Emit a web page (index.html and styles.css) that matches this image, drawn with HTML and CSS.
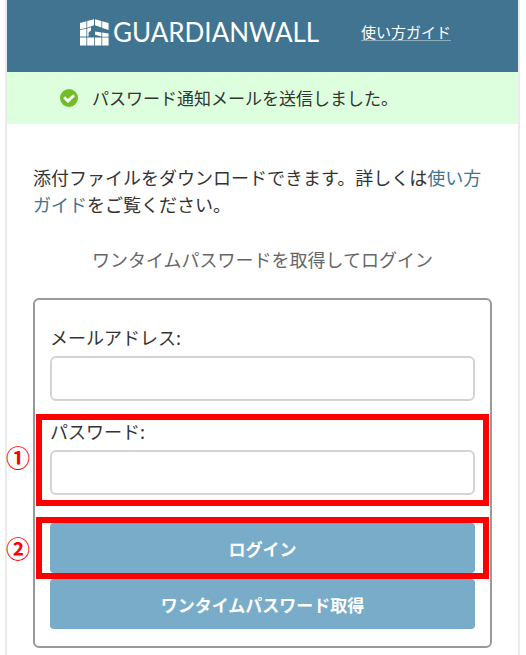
FILE: index.html
```html
<!DOCTYPE html>
<html lang="ja">
<head>
    <meta charset="UTF-8">
    <meta name="viewport" content="width=device-width, initial-scale=1.0">
    <title>GUARDIANWALL</title>
    <link rel="stylesheet" href="styles.css">
</head>
<body>
    <div class="page">
        <header class="header">
            <div class="logo">
                <svg class="logo-mark" viewBox="0 0 29 27" fill="#fff" aria-hidden="true">
                    <path d="M0 4 6.4 2.2V9L0 10.2zM7.2 2 14 .2V6.2L7.2 8.8zM15 .2 21.4 2V8.6L15 6.2zM22.2 2.2 28.6 4V11L22.2 9z"/>
                    <path d="M0 11 6.4 9.8V17.6H0zM7.2 9.6 11 8.2V11.5L8.6 13.5V17.6H7.2zM15 12.4 21.4 13.4V17.6L15 15.8zM22.2 13.5 28.6 14.5V17.8H22.2z"/>
                    <path d="M0 18.4H6.4V26.6H0zM7.2 18.4H14.2V26.6H7.2zM15 18.4H21.4V26.6H15zM22.2 18.6H28.6V26.6H22.2z"/>
                </svg>
                <span class="logo-text">GUARDIANWALL</span>
            </div>
            <a class="guide-link" href="#guide">使い方ガイド</a>
        </header>

        <div class="notice" role="status">
            <svg class="notice-icon" viewBox="0 0 18 18" aria-hidden="true">
                <circle cx="9" cy="9" r="9" fill="#6fbe28"/>
                <path d="M4.2 8.2 8 12 14 6.2" fill="none" stroke="#fff" stroke-width="2.8"/>
            </svg>
            <span>パスワード通知メールを送信しました。</span>
        </div>

        <main class="content">
            <p class="lead">添付ファイルをダウンロードできます。詳しくは<a href="#guide">使い方ガイド</a>をご覧ください。</p>
            <h1>ワンタイムパスワードを取得してログイン</h1>

            <form class="login-form">
                <div class="form-group">
                    <label for="email">メールアドレス:</label>
                    <input type="email" id="email" name="email">
                </div>
                <div class="form-group marked">
                    <label for="password">パスワード:</label>
                    <input type="password" id="password" name="password">
                    <span class="mark-frame"></span>
                    <span class="mark-number">①</span>
                </div>
                <div class="actions">
                    <div class="marked marked-button">
                        <button type="submit">ログイン</button>
                        <span class="mark-frame"></span>
                        <span class="mark-number">②</span>
                    </div>
                    <button type="button">ワンタイムパスワード取得</button>
                </div>
            </form>
        </main>
    </div>
</body>
</html>
```

FILE: styles.css
```css
* {
    box-sizing: border-box;
}
body {
    margin: 0;
    background-color: #fff;
    color: #333;
    font-family: "Noto Sans CJK JP", sans-serif;
    font-size: 18px;
    line-height: 26px;
}
a {
    color: #407490;
    text-decoration: none;
}
.page {
    margin: 0 6px 0 5px;
    min-height: 100vh;
    border: solid #ebebeb;
    border-width: 0 2px;
}
.header {
    display: flex;
    align-items: center;
    justify-content: space-between;
    height: 72px;
    padding: 0 67px 8px 73px;
    background-color: #407490;
}
.logo {
    display: flex;
    align-items: center;
    gap: 4px;
    color: #fff;
}
.logo-mark {
    width: 29px;
    height: 27px;
}
.logo-text {
    font-family: Lato, sans-serif;
    font-size: 26px;
    line-height: 32px;
}
.guide-link {
    border-bottom: 1px solid #8cacbc;
    color: #fff;
    font-size: 15px;
    line-height: 17px;
}
.notice {
    display: flex;
    align-items: center;
    gap: 14px;
    height: 52px;
    padding-left: 53px;
    background-color: #dfd;
    font-size: 17px;
}
.notice-icon {
    width: 18px;
    height: 18px;
}
.content {
    padding: 40px 26px 6px;
}
.lead {
    margin: 0 0 28px;
    line-height: 27px;
}
h1 {
    margin: 0 0 26px;
    color: #666;
    font-size: 18px;
    font-weight: normal;
    text-align: center;
}
.login-form {
    padding: 24px 15px 17px;
    border: 2px solid #999;
    border-radius: 6px;
}
.form-group {
    margin-bottom: 17px;
}
label {
    display: block;
    margin-bottom: 6px;
}
input {
    display: block;
    width: 100%;
    height: 45px;
    padding: 8px;
    border: 2px solid #d3d3d3;
    border-radius: 6px;
    background-color: #fff;
    font: inherit;
}
.actions {
    display: grid;
    gap: 6px;
    margin-top: 28px;
}
button {
    display: block;
    width: 100%;
    height: 50px;
    padding: 0;
    border: none;
    border-radius: 4px;
    background-color: #78acc8;
    color: #fff;
    font: bold 17px "Noto Sans CJK JP", sans-serif;
    cursor: pointer;
}

/* Numbered step markers */
.marked {
    position: relative;
}
.mark-frame {
    position: absolute;
    inset: -4px -14px -11px;
    border: 6px solid #f00;
    pointer-events: none;
}
.marked-button .mark-frame {
    inset: -6px -14px;
}
.mark-number {
    position: absolute;
    top: 50%;
    left: -44px;
    transform: translateY(-50%);
    color: #f00;
    font-size: 24px;
    font-weight: bold;
}
```
